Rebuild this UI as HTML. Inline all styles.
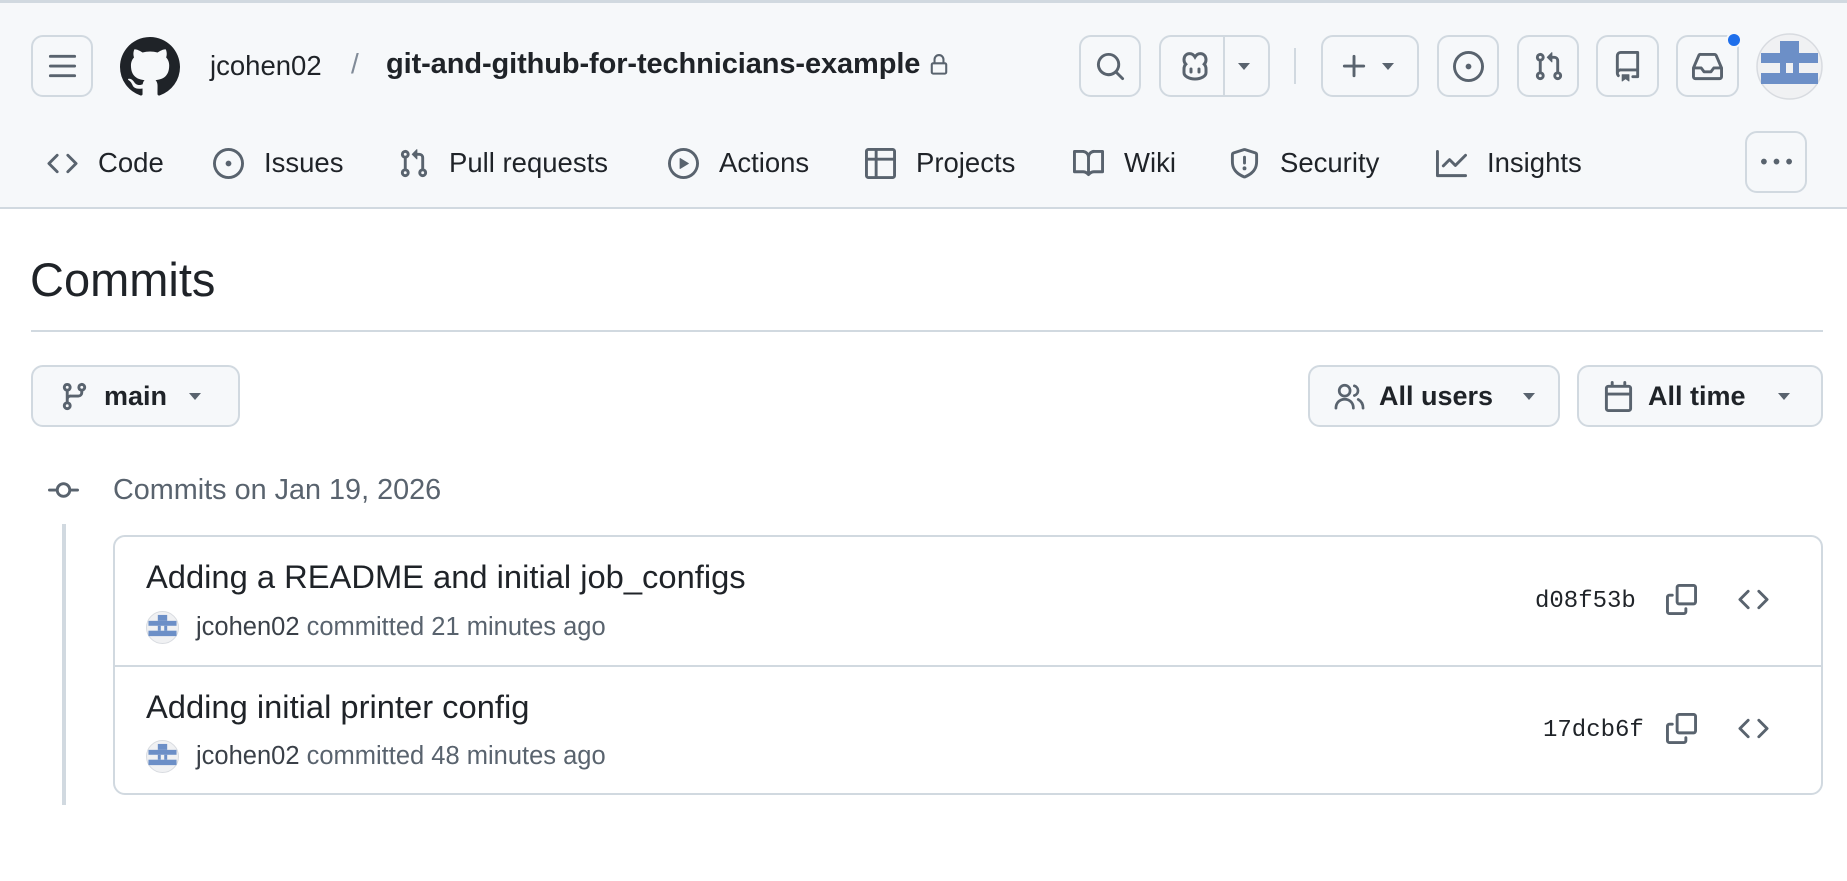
<!DOCTYPE html>
<html><head><meta charset="utf-8"><style>
*{box-sizing:border-box;margin:0;padding:0}
body{width:1847px;height:881px;background:#fff;font-family:"Liberation Sans",sans-serif;color:#1f2328;position:relative;overflow:hidden}
.a{position:absolute}
.hdr{left:0;top:0;width:1847px;height:209px;background:#f6f8fa;border-top:3px solid #d1d9e0;border-bottom:2px solid #d1d9e0}
.btn{position:absolute;border:2px solid #d1d9e0;border-radius:12px;background:#f6f8fa;display:flex;align-items:center;justify-content:center}
svg{display:block}
.ic{fill:#59636e}
.nav{position:absolute;top:147px;height:32px;display:flex;align-items:center;font-size:27.5px;color:#1f2328}
.nav svg{margin-right:20px}
.t{white-space:nowrap}
</style></head><body>
<div class="a hdr"></div>
<div class="btn" style="left:31px;top:35px;width:62px;height:62px"><svg width="31" height="31" viewBox="0 0 16 16" class="ic"><path d="M1 2.75A.75.75 0 0 1 1.75 2h12.5a.75.75 0 0 1 0 1.5H1.75A.75.75 0 0 1 1 2.75Zm0 5A.75.75 0 0 1 1.75 7h12.5a.75.75 0 0 1 0 1.5H1.75A.75.75 0 0 1 1 7.75ZM1.75 12h12.5a.75.75 0 0 1 0 1.5H1.75a.75.75 0 0 1 0-1.5Z"/></svg></div>
<svg class="a" style="left:120px;top:37px" width="60" height="60" viewBox="0 0 16 16" fill="#1f2328"><path d="M8 0c4.42 0 8 3.58 8 8a8.013 8.013 0 0 1-5.45 7.59c-.4.08-.55-.17-.55-.38 0-.27.01-1.13.01-2.2 0-.75-.25-1.23-.54-1.48 1.78-.2 3.65-.88 3.65-3.95 0-.88-.31-1.59-.82-2.15.08-.2.36-1.02-.08-2.12 0 0-.67-.22-2.2.82-.64-.18-1.32-.27-2-.27-.68 0-1.36.09-2 .27-1.53-1.03-2.2-.82-2.2-.82-.44 1.1-.16 1.92-.08 2.12-.51.56-.82 1.28-.82 2.15 0 3.06 1.86 3.75 3.64 3.95-.23.2-.44.55-.51 1.07-.46.21-1.61.55-2.33-.66-.15-.24-.6-.83-1.23-.82-.67.01-.27.38.01.53.34.19.73.9.82 1.13.16.45.68 1.31 2.69.94 0 .67.01 1.3.01 1.49 0 .21-.15.45-.55.38A7.995 7.995 0 0 1 0 8c0-4.42 3.58-8 8-8Z"/></svg>
<div class="a t" style="left:210px;top:50px;font-size:27.5px">jcohen02</div>
<div class="a t" style="left:351px;top:48px;font-size:28px;color:#818b98">/</div>
<div class="a t" style="left:386px;top:48px;font-size:29px;font-weight:bold;letter-spacing:-0.1px;display:flex;align-items:center">git-and-github-for-technicians-example<svg style="margin-left:8px" width="22" height="22" viewBox="0 0 16 16" fill="#59636e"><path d="M4 4a4 4 0 0 1 8 0v2h.25c.966 0 1.75.784 1.75 1.75v5.5A1.75 1.75 0 0 1 12.25 15h-8.5A1.75 1.75 0 0 1 2 13.25v-5.5C2 6.784 2.784 6 3.75 6H4Zm8.25 3.5h-8.5a.25.25 0 0 0-.25.25v5.5c0 .138.112.25.25.25h8.5a.25.25 0 0 0 .25-.25v-5.5a.25.25 0 0 0-.25-.25ZM10.5 6V4a2.5 2.5 0 1 0-5 0v2Z"/></svg></div>

<div class="btn" style="left:1079px;top:35px;width:62px;height:62px"><svg width="31" height="31" viewBox="0 0 16 16" class="ic"><path d="M10.68 11.74a6 6 0 0 1-7.922-8.982 6 6 0 0 1 8.982 7.922l3.04 3.04a.749.749 0 0 1-.326 1.275.749.749 0 0 1-.734-.215ZM11.5 7a4.499 4.499 0 1 0-8.997 0A4.499 4.499 0 0 0 11.5 7Z"/></svg></div>
<div class="btn" style="left:1159px;top:35px;width:111px;height:62px;justify-content:flex-start">
 <svg style="margin-left:18px" width="32" height="32" viewBox="0 0 16 16" fill="none" stroke="#59636e" stroke-width="1.5"><path d="M2.5 9.5c0-1 .3-1.8.9-2.4C2.8 6.5 2.5 5.7 2.5 4.8 2.5 3 3.7 1.8 5.3 1.8c1.2 0 2.1.7 2.7 1.7.6-1 1.5-1.7 2.7-1.7 1.6 0 2.8 1.2 2.8 3 0 .9-.3 1.7-.9 2.3.6.6.9 1.4.9 2.4v1.8c0 1.7-2.4 3.2-5.5 3.2s-5.5-1.5-5.5-3.2Z"/><path d="M6 9.5v1.5M10 9.5v1.5" stroke-linecap="round"/></svg>
 <div style="position:absolute;left:62px;top:0;width:2px;height:58px;background:#d1d9e0"></div>
 <svg style="position:absolute;left:75px;top:21px" width="16" height="16" viewBox="0 0 16 16" class="ic"><path d="M2 5h12l-6 7Z"/></svg>
</div>
<div class="a" style="left:1294px;top:48px;width:2px;height:36px;background:#d1d9e0"></div>
<div class="btn" style="left:1321px;top:35px;width:98px;height:62px;justify-content:flex-start"><svg style="margin-left:16px" width="31" height="31" viewBox="0 0 16 16" class="ic"><path d="M7.75 2a.75.75 0 0 1 .75.75V7h4.25a.75.75 0 0 1 0 1.5H8.5v4.25a.75.75 0 0 1-1.5 0V8.5H2.75a.75.75 0 0 1 0-1.5H7V2.75A.75.75 0 0 1 7.75 2Z"/></svg><svg style="margin-left:10px" width="16" height="16" viewBox="0 0 16 16" class="ic"><path d="M2 5h12l-6 7Z"/></svg></div>
<div class="btn" style="left:1437px;top:35px;width:62px;height:62px"><svg width="31" height="31" viewBox="0 0 16 16" class="ic"><path d="M8 9.5a1.5 1.5 0 1 0 0-3 1.5 1.5 0 0 0 0 3Z"/><path d="M8 0a8 8 0 1 1 0 16A8 8 0 0 1 8 0ZM1.5 8a6.5 6.5 0 1 0 13 0 6.5 6.5 0 0 0-13 0Z"/></svg></div>
<div class="btn" style="left:1517px;top:35px;width:62px;height:62px"><svg width="31" height="31" viewBox="0 0 16 16" class="ic"><path d="M1.5 3.25a2.25 2.25 0 1 1 3 2.122v5.256a2.251 2.251 0 1 1-1.5 0V5.372A2.25 2.25 0 0 1 1.5 3.25Zm5.677-.177L9.573.677A.25.25 0 0 1 10 .854V2.5h1A2.5 2.5 0 0 1 13.5 5v5.628a2.251 2.251 0 1 1-1.5 0V5a1 1 0 0 0-1-1h-1v1.646a.25.25 0 0 1-.427.177L7.177 3.427a.25.25 0 0 1 0-.354ZM3.75 2.5a.75.75 0 1 0 0 1.5.75.75 0 0 0 0-1.5Zm0 9.5a.75.75 0 1 0 0 1.5.75.75 0 0 0 0-1.5Zm8.25.75a.75.75 0 1 0 1.5 0 .75.75 0 0 0-1.5 0Z"/></svg></div>
<div class="btn" style="left:1596px;top:35px;width:63px;height:62px"><svg width="31" height="31" viewBox="0 0 16 16" class="ic"><path d="M2 2.5A2.5 2.5 0 0 1 4.5 0h8.75a.75.75 0 0 1 .75.75v12.5a.75.75 0 0 1-.75.75h-2.5a.75.75 0 0 1 0-1.5h1.75v-2h-8a1 1 0 0 0-.714 1.7.75.75 0 1 1-1.072 1.05A2.495 2.495 0 0 1 2 11.5Zm10.5-1h-8a1 1 0 0 0-1 1v6.708A2.486 2.486 0 0 1 4.5 9h8ZM5 12.25a.25.25 0 0 1 .25-.25h3.5a.25.25 0 0 1 .25.25v3.25a.25.25 0 0 1-.4.2l-1.45-1.087a.249.249 0 0 0-.3 0L5.4 15.7a.25.25 0 0 1-.4-.2Z"/></svg></div>
<div class="btn" style="left:1676px;top:35px;width:63px;height:62px"><svg width="31" height="31" viewBox="0 0 16 16" class="ic"><path d="M2.8 2.06A1.75 1.75 0 0 1 4.41 1h7.18c.7 0 1.333.417 1.61 1.06l2.74 6.395c.04.093.06.194.06.295v4.5A1.75 1.75 0 0 1 14.25 15H1.75A1.75 1.75 0 0 1 0 13.25v-4.5c0-.101.02-.202.06-.295Zm1.61.44a.25.25 0 0 0-.23.152L1.887 8H4.75a.75.75 0 0 1 .6.3L6.625 10h2.75l1.275-1.7a.75.75 0 0 1 .6-.3h2.863L11.82 2.652a.25.25 0 0 0-.23-.152Zm10.09 7h-2.875l-1.275 1.7a.75.75 0 0 1-.6.3h-3.5a.75.75 0 0 1-.6-.3L4.375 9.5H1.5v3.75c0 .138.112.25.25.25h12.5a.25.25 0 0 0 .25-.25Z"/></svg></div>
<div class="a" style="left:1726px;top:32px;width:16px;height:16px;border-radius:50%;background:#1f6feb;border:2px solid #f6f8fa"></div>
<svg class="a" style="left:1756px;top:33px" width="67" height="67" viewBox="0 0 67 67"><circle cx="33.5" cy="33.5" r="32.5" fill="#f0f1f3" stroke="#d8dbe0" stroke-width="1.5"/><g fill="#6c8fc7"><rect x="24" y="8" width="19" height="12"/><rect x="5" y="20" width="57" height="10"/><rect x="24" y="30" width="6" height="10"/><rect x="37" y="30" width="6" height="10"/><rect x="5" y="40" width="57" height="11"/></g></svg>

<div class="nav" style="left:47px"><svg width="31" height="31" viewBox="0 0 16 16" class="ic"><path d="m11.28 3.22 4.25 4.25a.75.75 0 0 1 0 1.06l-4.25 4.25a.749.749 0 0 1-1.275-.326.749.749 0 0 1 .215-.734L13.94 8l-3.72-3.72a.749.749 0 0 1 .326-1.275.749.749 0 0 1 .734.215Zm-6.56 0a.751.751 0 0 1 1.042.018.751.751 0 0 1 .018 1.042L2.06 8l3.72 3.72a.749.749 0 0 1-.326 1.275.749.749 0 0 1-.734-.215L.47 8.53a.75.75 0 0 1 0-1.06Z"/></svg>Code</div>
<div class="nav" style="left:213px"><svg width="31" height="31" viewBox="0 0 16 16" class="ic"><path d="M8 9.5a1.5 1.5 0 1 0 0-3 1.5 1.5 0 0 0 0 3Z"/><path d="M8 0a8 8 0 1 1 0 16A8 8 0 0 1 8 0ZM1.5 8a6.5 6.5 0 1 0 13 0 6.5 6.5 0 0 0-13 0Z"/></svg>Issues</div>
<div class="nav" style="left:398px"><svg width="31" height="31" viewBox="0 0 16 16" class="ic"><path d="M1.5 3.25a2.25 2.25 0 1 1 3 2.122v5.256a2.251 2.251 0 1 1-1.5 0V5.372A2.25 2.25 0 0 1 1.5 3.25Zm5.677-.177L9.573.677A.25.25 0 0 1 10 .854V2.5h1A2.5 2.5 0 0 1 13.5 5v5.628a2.251 2.251 0 1 1-1.5 0V5a1 1 0 0 0-1-1h-1v1.646a.25.25 0 0 1-.427.177L7.177 3.427a.25.25 0 0 1 0-.354ZM3.75 2.5a.75.75 0 1 0 0 1.5.75.75 0 0 0 0-1.5Zm0 9.5a.75.75 0 1 0 0 1.5.75.75 0 0 0 0-1.5Zm8.25.75a.75.75 0 1 0 1.5 0 .75.75 0 0 0-1.5 0Z"/></svg>Pull requests</div>
<div class="nav" style="left:668px"><svg width="31" height="31" viewBox="0 0 16 16" class="ic"><path d="M8 0a8 8 0 1 1 0 16A8 8 0 0 1 8 0ZM1.5 8a6.5 6.5 0 1 0 13 0 6.5 6.5 0 0 0-13 0Zm4.879-2.773 4.264 2.559a.25.25 0 0 1 0 .428l-4.264 2.559A.25.25 0 0 1 6 10.559V5.442a.25.25 0 0 1 .379-.215Z"/></svg>Actions</div>
<div class="nav" style="left:865px"><svg width="31" height="31" viewBox="0 0 16 16" class="ic"><path d="M0 1.75C0 .784.784 0 1.75 0h12.5C15.216 0 16 .784 16 1.75v12.5A1.75 1.75 0 0 1 14.25 16H1.75A1.75 1.75 0 0 1 0 14.25ZM6.5 6.5v8h7.75a.25.25 0 0 0 .25-.25V6.5Zm8-1.5V1.75a.25.25 0 0 0-.25-.25H6.5V5Zm-13 1.5v7.75c0 .138.112.25.25.25H5v-8ZM5 5V1.5H1.75a.25.25 0 0 0-.25.25V5Z"/></svg>Projects</div>
<div class="nav" style="left:1073px"><svg width="31" height="31" viewBox="0 0 16 16" class="ic"><path d="M0 1.75A.75.75 0 0 1 .75 1h4.253c1.227 0 2.317.59 3 1.501A3.743 3.743 0 0 1 11.006 1h4.245a.75.75 0 0 1 .75.75v10.5a.75.75 0 0 1-.75.75h-4.507a2.25 2.25 0 0 0-1.591.659l-.622.621a.75.75 0 0 1-1.06 0l-.622-.621A2.25 2.25 0 0 0 5.258 13H.75a.75.75 0 0 1-.75-.75Zm7.251 10.324.004-5.073-.002-2.253A2.25 2.25 0 0 0 5.003 2.5H1.5v9h3.757a3.75 3.75 0 0 1 1.994.574ZM8.755 4.75l-.004 7.322a3.752 3.752 0 0 1 1.992-.572H14.5v-9h-3.495a2.25 2.25 0 0 0-2.25 2.25Z"/></svg>Wiki</div>
<div class="nav" style="left:1229px"><svg width="31" height="31" viewBox="0 0 16 16" class="ic"><path d="M7.467.133a1.748 1.748 0 0 1 1.066 0l5.25 1.68A1.75 1.75 0 0 1 15 3.48V7c0 1.566-.32 3.182-1.303 4.682-.983 1.498-2.585 2.813-5.032 3.855a1.697 1.697 0 0 1-1.33 0c-2.447-1.042-4.049-2.357-5.032-3.855C1.32 10.182 1 8.566 1 7V3.48a1.755 1.755 0 0 1 1.217-1.667Zm.61 1.429a.25.25 0 0 0-.153 0l-5.25 1.68a.25.25 0 0 0-.174.238V7c0 1.358.275 2.666 1.057 3.86.784 1.194 2.121 2.34 4.366 3.297a.196.196 0 0 0 .154 0c2.245-.956 3.582-2.104 4.366-3.298C13.225 9.666 13.5 8.36 13.5 7V3.48a.251.251 0 0 0-.174-.237l-5.25-1.68ZM8.75 4.75v3a.75.75 0 0 1-1.5 0v-3a.75.75 0 0 1 1.5 0ZM9 10.5a1 1 0 1 1-2 0 1 1 0 0 1 2 0Z"/></svg>Security</div>
<div class="nav" style="left:1436px"><svg width="31" height="31" viewBox="0 0 16 16" class="ic"><path d="M1.5 1.75V13.5h13.75a.75.75 0 0 1 0 1.5H.75a.75.75 0 0 1-.75-.75V1.75a.75.75 0 0 1 1.5 0Zm14.28 2.53-5.25 5.25a.75.75 0 0 1-1.06 0L7 7.06 4.28 9.78a.751.751 0 0 1-1.042-.018.751.751 0 0 1-.018-1.042l3.25-3.25a.75.75 0 0 1 1.06 0L10 7.94l4.72-4.72a.751.751 0 0 1 1.042.018.751.751 0 0 1 .018 1.042Z"/></svg>Insights</div>
<div class="btn" style="left:1745px;top:131px;width:62px;height:62px"><svg width="31" height="31" viewBox="0 0 16 16" class="ic"><path d="M8 9a1.5 1.5 0 1 0 0-3 1.5 1.5 0 0 0 0 3ZM1.5 9a1.5 1.5 0 1 0 0-3 1.5 1.5 0 0 0 0 3Zm13 0a1.5 1.5 0 1 0 0-3 1.5 1.5 0 0 0 0 3Z"/></svg></div>

<div class="a t" style="left:30px;top:252px;font-size:47px">Commits</div>
<div class="a" style="left:31px;top:330px;width:1792px;height:2px;background:#d1d9e0"></div>

<div class="btn" style="left:31px;top:365px;width:209px;height:62px;justify-content:flex-start">
 <svg style="margin-left:26px" width="31" height="31" viewBox="0 0 16 16" class="ic"><path d="M9.5 3.25a2.25 2.25 0 1 1 3 2.122V6A2.5 2.5 0 0 1 10 8.5H6a1 1 0 0 0-1 1v1.128a2.251 2.251 0 1 1-1.5 0V5.372a2.25 2.25 0 1 1 1.5 0v1.836A2.493 2.493 0 0 1 6 7h4a1 1 0 0 0 1-1v-.628A2.25 2.25 0 0 1 9.5 3.25Zm-6 0a.75.75 0 1 0 1.5 0 .75.75 0 0 0-1.5 0Zm8.25-.75a.75.75 0 1 0 0 1.5.75.75 0 0 0 0-1.5ZM4.25 12a.75.75 0 1 0 0 1.5.75.75 0 0 0 0-1.5Z"/></svg>
 <span style="margin-left:14px;font-size:27px;font-weight:bold">main</span>
 <svg style="margin-left:20px" width="16" height="16" viewBox="0 0 16 16" class="ic"><path d="M2 5h12l-6 7Z"/></svg>
</div>
<div class="btn" style="left:1308px;top:365px;width:252px;height:62px;justify-content:flex-start">
 <svg style="margin-left:24px" width="31" height="31" viewBox="0 0 16 16" fill="none" stroke="#59636e" stroke-width="1.4" stroke-linecap="round"><circle cx="5.5" cy="5" r="2.8"/><path d="M1 14c0-2.8 2-4.6 4.5-4.6S10 11.2 10 14"/><path d="M10.5 2.5a2.6 2.6 0 0 1 0 5M12.5 9.5c1.4.8 2.5 2.3 2.5 4.5"/></svg>
 <span style="margin-left:14px;font-size:27px;font-weight:bold">All users</span>
 <svg style="margin-left:28px" width="16" height="16" viewBox="0 0 16 16" class="ic"><path d="M2 5h12l-6 7Z"/></svg>
</div>
<div class="btn" style="left:1577px;top:365px;width:246px;height:62px;justify-content:flex-start">
 <svg style="margin-left:24px" width="31" height="31" viewBox="0 0 16 16" class="ic"><path d="M4.75 0a.75.75 0 0 1 .75.75V2h5V.75a.75.75 0 0 1 1.5 0V2h1.25c.966 0 1.75.784 1.75 1.75v10.5A1.75 1.75 0 0 1 13.25 16H2.75A1.75 1.75 0 0 1 1 14.25V3.75C1 2.784 1.784 2 2.75 2H4V.75A.75.75 0 0 1 4.75 0ZM2.5 7.5v6.75c0 .138.112.25.25.25h10.5a.25.25 0 0 0 .25-.25V7.5Zm10.75-4H2.75a.25.25 0 0 0-.25.25V6h11V3.75a.25.25 0 0 0-.25-.25Z"/></svg>
 <span style="margin-left:14px;font-size:27px;font-weight:bold">All time</span>
 <svg style="margin-left:30px" width="16" height="16" viewBox="0 0 16 16" class="ic"><path d="M2 5h12l-6 7Z"/></svg>
</div>

<svg class="a" style="left:48px;top:475px" width="31" height="31" viewBox="0 0 16 16" fill="#59636e"><path d="M11.93 8.5a4.002 4.002 0 0 1-7.86 0H.75a.75.75 0 0 1 0-1.5h3.32a4.002 4.002 0 0 1 7.86 0h3.32a.75.75 0 0 1 0 1.5Zm-1.43-.75a2.5 2.5 0 1 0-5 0 2.5 2.5 0 0 0 5 0Z"/></svg>
<div class="a t" style="left:113px;top:474px;font-size:28.8px;color:#59636e">Commits on Jan 19, 2026</div>
<div class="a" style="left:62px;top:524px;width:4px;height:281px;background:#d1d9e0"></div>

<div class="a" style="left:113px;top:535px;width:1710px;height:260px;border:2px solid #d1d9e0;border-radius:12px"></div>
<div class="a" style="left:115px;top:665px;width:1706px;height:2px;background:#d1d9e0"></div>

<div class="a t" style="left:146px;top:558px;font-size:32.7px;font-weight:500">Adding a README and initial job_configs</div>
<svg class="a" style="left:146px;top:611px" width="33" height="33" viewBox="0 0 67 67"><circle cx="33.5" cy="33.5" r="32.5" fill="#f0f1f3" stroke="#d8dbe0" stroke-width="2"/><g fill="#6c8fc7"><rect x="24" y="8" width="19" height="12"/><rect x="5" y="20" width="57" height="10"/><rect x="24" y="30" width="6" height="10"/><rect x="37" y="30" width="6" height="10"/><rect x="5" y="40" width="57" height="11"/></g></svg>
<div class="a t" style="left:196px;top:613px;font-size:25.5px;color:#59636e"><span style="color:#3a4048">jcohen02</span> committed 21 minutes ago</div>
<div class="a t" style="left:1535px;top:588px;font-size:24px;font-family:'Liberation Mono',monospace">d08f53b</div>
<svg class="a" style="left:1666px;top:584px" width="31" height="31" viewBox="0 0 16 16" fill="#59636e"><path d="M0 6.75C0 5.784.784 5 1.75 5h1.5a.75.75 0 0 1 0 1.5h-1.5a.25.25 0 0 0-.25.25v7.5c0 .138.112.25.25.25h7.5a.25.25 0 0 0 .25-.25v-1.5a.75.75 0 0 1 1.5 0v1.5A1.75 1.75 0 0 1 9.25 16h-7.5A1.75 1.75 0 0 1 0 14.25Z"/><path d="M5 1.75C5 .784 5.784 0 6.75 0h7.5C15.216 0 16 .784 16 1.75v7.5A1.75 1.75 0 0 1 14.25 11h-7.5A1.75 1.75 0 0 1 5 9.25Zm1.75-.25a.25.25 0 0 0-.25.25v7.5c0 .138.112.25.25.25h7.5a.25.25 0 0 0 .25-.25v-7.5a.25.25 0 0 0-.25-.25Z"/></svg>
<svg class="a" style="left:1738px;top:584px" width="31" height="31" viewBox="0 0 16 16" fill="#59636e"><path d="m11.28 3.22 4.25 4.25a.75.75 0 0 1 0 1.06l-4.25 4.25a.749.749 0 0 1-1.275-.326.749.749 0 0 1 .215-.734L13.94 8l-3.72-3.72a.749.749 0 0 1 .326-1.275.749.749 0 0 1 .734.215Zm-6.56 0a.751.751 0 0 1 1.042.018.751.751 0 0 1 .018 1.042L2.06 8l3.72 3.72a.749.749 0 0 1-.326 1.275.749.749 0 0 1-.734-.215L.47 8.53a.75.75 0 0 1 0-1.06Z"/></svg>

<div class="a t" style="left:146px;top:688px;font-size:32.7px;font-weight:500">Adding initial printer config</div>
<svg class="a" style="left:146px;top:740px" width="33" height="33" viewBox="0 0 67 67"><circle cx="33.5" cy="33.5" r="32.5" fill="#f0f1f3" stroke="#d8dbe0" stroke-width="2"/><g fill="#6c8fc7"><rect x="24" y="8" width="19" height="12"/><rect x="5" y="20" width="57" height="10"/><rect x="24" y="30" width="6" height="10"/><rect x="37" y="30" width="6" height="10"/><rect x="5" y="40" width="57" height="11"/></g></svg>
<div class="a t" style="left:196px;top:742px;font-size:25.5px;color:#59636e"><span style="color:#3a4048">jcohen02</span> committed 48 minutes ago</div>
<div class="a t" style="left:1543px;top:717px;font-size:24px;font-family:'Liberation Mono',monospace">17dcb6f</div>
<svg class="a" style="left:1666px;top:713px" width="31" height="31" viewBox="0 0 16 16" fill="#59636e"><path d="M0 6.75C0 5.784.784 5 1.75 5h1.5a.75.75 0 0 1 0 1.5h-1.5a.25.25 0 0 0-.25.25v7.5c0 .138.112.25.25.25h7.5a.25.25 0 0 0 .25-.25v-1.5a.75.75 0 0 1 1.5 0v1.5A1.75 1.75 0 0 1 9.25 16h-7.5A1.75 1.75 0 0 1 0 14.25Z"/><path d="M5 1.75C5 .784 5.784 0 6.75 0h7.5C15.216 0 16 .784 16 1.75v7.5A1.75 1.75 0 0 1 14.25 11h-7.5A1.75 1.75 0 0 1 5 9.25Zm1.75-.25a.25.25 0 0 0-.25.25v7.5c0 .138.112.25.25.25h7.5a.25.25 0 0 0 .25-.25v-7.5a.25.25 0 0 0-.25-.25Z"/></svg>
<svg class="a" style="left:1738px;top:713px" width="31" height="31" viewBox="0 0 16 16" fill="#59636e"><path d="m11.28 3.22 4.25 4.25a.75.75 0 0 1 0 1.06l-4.25 4.25a.749.749 0 0 1-1.275-.326.749.749 0 0 1 .215-.734L13.94 8l-3.72-3.72a.749.749 0 0 1 .326-1.275.749.749 0 0 1 .734.215Zm-6.56 0a.751.751 0 0 1 1.042.018.751.751 0 0 1 .018 1.042L2.06 8l3.72 3.72a.749.749 0 0 1-.326 1.275.749.749 0 0 1-.734-.215L.47 8.53a.75.75 0 0 1 0-1.06Z"/></svg>
</body></html>
